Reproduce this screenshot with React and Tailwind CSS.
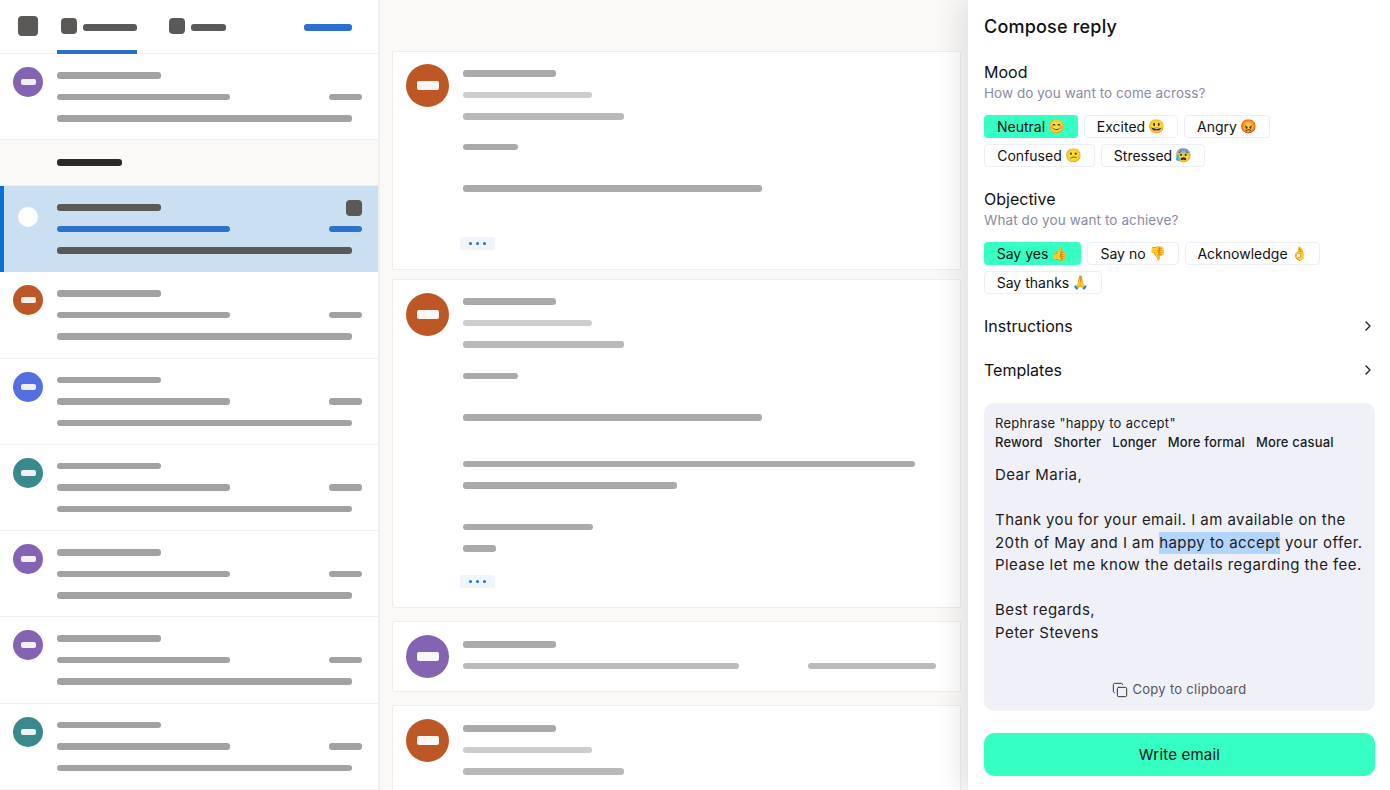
import React from 'react';
import { ChevronRight, Copy } from 'lucide-react';

const Bar = ({ className }) => <div className={`h-[6.5px] rounded-[3px] blur-[0.3px] ${className}`} />;

const Avatar = ({ color }) => (
    <div className={`w-[30px] h-[30px] rounded-full flex items-center justify-center shrink-0 ${color}`}>
        <div className="w-[15px] h-[6px] rounded-[2px] bg-white/90" />
    </div>
);

const BigAvatar = ({ color }) => (
    <div className={`w-[43px] h-[43px] rounded-full flex items-center justify-center shrink-0 ${color}`}>
        <div className="w-[22px] h-[9px] rounded-[2px] bg-white/95" />
    </div>
);

const Row = ({ color }) => (
    <div className="h-[86.3px] flex pl-[13px] pt-[13px] border-b border-[#f1f0ee] bg-white">
        <Avatar color={color} />
        <div className="ml-[14px] w-[305px] pt-[5px]">
            <Bar className="w-[104px] bg-[#a3a2a0]" />
            <div className="flex justify-between mt-[15px]">
                <Bar className="w-[173px] bg-[#a3a2a0]" />
                <Bar className="w-[33px] bg-[#a3a2a0]" />
            </div>
            <Bar className="w-[295px] mt-[15px] bg-[#a3a2a0]" />
        </div>
    </div>
);

const MoreChip = ({ className }) => (
    <div className={`w-[35px] h-[13px] ml-[-3px] rounded-[2px] bg-[#eff5fb] flex items-center justify-center gap-[4px] ${className}`}>
        <span className="w-[3px] h-[3px] rounded-full bg-[#2a6fcb]" />
        <span className="w-[3px] h-[3px] rounded-full bg-[#2a6fcb]" />
        <span className="w-[3px] h-[3px] rounded-full bg-[#2a6fcb]" />
    </div>
);

const MessageHead = () => (
    <>
        <Bar className="w-[93px] bg-[#aaaaa8]" />
        <Bar className="w-[129px] mt-[15px] bg-[#cdcdcb]" />
        <Bar className="w-[161px] mt-[15px] bg-[#b9b9b7]" />
    </>
);

const Chip = ({ label, emoji, active, className }) => (
    <div className={`h-[23px] flex items-center justify-center gap-[3px] rounded-[4px] text-[14px] text-[#111] whitespace-nowrap ${active ? 'bg-[#36ffc4]' : 'bg-white border border-[#eeeef6]'} ${className}`}>
        {label}
        <span className="text-[13.5px] leading-none">{emoji}</span>
    </div>
);

const App = () => {
    return (
        <div className="w-[1390px] h-[790px] overflow-hidden flex bg-white font-['Inter','Noto_Sans',sans-serif]">
            {/* Mail list */}
            <div className="w-[380px] shrink-0 border-r-2 border-[#f1f0ee]">
                <div className="h-[54px] flex border-b border-[#f1f0ee]">
                    <div className="w-[20px] h-[20px] mt-[16px] ml-[18px] rounded-[4px] bg-[#5a5957]" />
                    <div className="ml-[19px] w-[80px] h-[54px] border-b-4 border-[#2a6fcb] flex pl-[4px] pt-[18px]">
                        <div className="w-[16px] h-[16px] rounded-[4px] bg-[#5a5957]" />
                        <Bar className="w-[54px] ml-[6px] mt-[6px] bg-[#5a5957]" />
                    </div>
                    <div className="ml-[32px] flex pt-[18px]">
                        <div className="w-[16px] h-[16px] rounded-[4px] bg-[#5a5957]" />
                        <Bar className="w-[35px] ml-[6px] mt-[6px] bg-[#5a5957]" />
                    </div>
                    <Bar className="w-[48px] ml-[78px] mt-[24px] bg-[#2a6fcb]" />
                </div>
                <Row color="bg-[#8463b3]" />
                <div className="h-[46px] bg-[#faf9f7] pl-[57px] pt-[19px] border-b border-[#f1f0ee]">
                    <Bar className="w-[65px] bg-[#2b2a29]" />
                </div>
                <div className="h-[86px] flex bg-[#cbdff2] border-l-[4px] border-[#0b72d4] pl-[14px] pt-[21px]">
                    <div className="w-[20px] h-[20px] rounded-full bg-white" />
                    <div className="ml-[19px] w-[305px] relative mt-[-3px]">
                        <Bar className="w-[104px] bg-[#5a5957]" />
                        <div className="absolute right-0 top-[-4px] w-[16px] h-[16px] rounded-[4px] bg-[#5a5957]" />
                        <div className="flex justify-between mt-[15px]">
                            <Bar className="w-[173px] bg-[#2f72cc]" />
                            <Bar className="w-[33px] bg-[#2f72cc]" />
                        </div>
                        <Bar className="w-[295px] mt-[15px] bg-[#5a5957]" />
                    </div>
                </div>
                <Row color="bg-[#bd5725]" />
                <Row color="bg-[#5470e0]" />
                <Row color="bg-[#3a8a8d]" />
                <Row color="bg-[#8463b3]" />
                <Row color="bg-[#8463b3]" />
                <Row color="bg-[#3a8a8d]" />
            </div>

            {/* Conversation */}
            <div className="w-[588px] shrink-0 bg-[#faf9f7] pl-[12px] pt-[51px]">
                <div className="w-[569px] h-[219px] bg-white border border-[#eeedeb] rounded-[2px] flex pl-[13px] pt-[12px]">
                    <BigAvatar color="bg-[#bd5725]" />
                    <div className="ml-[14px] pt-[6px]">
                        <MessageHead />
                        <Bar className="w-[55px] mt-[24px] bg-[#aaaaa8]" />
                        <Bar className="w-[299px] mt-[35px] bg-[#aaaaa8]" />
                        <MoreChip className="mt-[45px]" />
                    </div>
                </div>
                <div className="w-[569px] h-[329px] mt-[9px] bg-white border border-[#eeedeb] rounded-[2px] flex pl-[13px] pt-[13px]">
                    <BigAvatar color="bg-[#bd5725]" />
                    <div className="ml-[14px] pt-[5px]">
                        <MessageHead />
                        <Bar className="w-[55px] mt-[25px] bg-[#aaaaa8]" />
                        <Bar className="w-[299px] mt-[35px] bg-[#aaaaa8]" />
                        <Bar className="w-[452px] mt-[40px] bg-[#aaaaa8]" />
                        <Bar className="w-[214px] mt-[15px] bg-[#aaaaa8]" />
                        <Bar className="w-[130px] mt-[35px] bg-[#aaaaa8]" />
                        <Bar className="w-[33px] mt-[15px] bg-[#aaaaa8]" />
                        <MoreChip className="mt-[23px]" />
                    </div>
                </div>
                <div className="w-[569px] h-[71px] mt-[13px] bg-white border border-[#eeedeb] rounded-[2px] flex pl-[13px] pt-[13px]">
                    <BigAvatar color="bg-[#8463b3]" />
                    <div className="ml-[14px] pt-[6px] w-[473px]">
                        <Bar className="w-[93px] bg-[#aaaaa8]" />
                        <div className="flex justify-between mt-[15px]">
                            <Bar className="w-[276px] bg-[#bbbbb9]" />
                            <Bar className="w-[128px] bg-[#bbbbb9]" />
                        </div>
                    </div>
                </div>
                <div className="w-[569px] h-[120px] mt-[13px] bg-white border border-[#eeedeb] rounded-[2px] flex pl-[13px] pt-[13px]">
                    <BigAvatar color="bg-[#bd5725]" />
                    <div className="ml-[14px] pt-[6px]">
                        <MessageHead />
                    </div>
                </div>
            </div>

            {/* Compose panel */}
            <div className="w-[422px] shrink-0 bg-white pl-[16px] pr-[15px] relative shadow-[-10px_0_24px_rgba(0,0,0,0.09)]">
                <h1 className="text-[18px] leading-[24px] mt-[15px] font-medium text-[#111] tracking-[0.2px]">Compose reply</h1>
                <div className="mt-[22px] text-[16px] leading-[22px] text-[#111]">Mood</div>
                <div className="text-[13.5px] leading-[20px] text-[#8a8aa3] tracking-[0.05px]">How do you want to come across?</div>
                <div className="mt-[12px] flex flex-wrap gap-x-[6px] gap-y-[6px]">
                    <Chip active label="Neutral" emoji="😊" className="w-[94px]" />
                    <Chip label="Excited" emoji="😃" className="w-[94px]" />
                    <Chip label="Angry" emoji="😡" className="w-[86px]" />
                    <Chip label="Confused" emoji="😕" className="w-[111px]" />
                    <Chip label="Stressed" emoji="😰" className="w-[104px]" />
                </div>
                <div className="mt-[21px] text-[16px] leading-[22px] text-[#111]">Objective</div>
                <div className="text-[13.5px] leading-[20px] text-[#8a8aa3] tracking-[0.1px]">What do you want to achieve?</div>
                <div className="mt-[12px] flex flex-wrap gap-x-[6px] gap-y-[6px]">
                    <Chip active label="Say yes" emoji="👍" className="w-[97px]" />
                    <Chip label="Say no" emoji="👎" className="w-[92px]" />
                    <Chip label="Acknowledge" emoji="👌" className="w-[135px]" />
                    <Chip label="Say thanks" emoji="🙏" className="w-[118px]" />
                </div>
                <div className="mt-[20px] h-[24px] flex items-center justify-between text-[16px] text-[#111]">
                    Instructions
                    <ChevronRight size={16} strokeWidth={2} className="text-[#222] mr-[-1px]" />
                </div>
                <div className="mt-[20px] h-[24px] flex items-center justify-between text-[16px] text-[#111]">
                    Templates
                    <ChevronRight size={16} strokeWidth={2} className="text-[#222] mr-[-1px]" />
                </div>
                <div className="mt-[21px] h-[308px] w-[391px] rounded-[10px] bg-[#f0f1f8] px-[11px] pt-[11px] text-[#1c1c22]">
                    <div className="text-[13px] leading-[19px] tracking-[0.3px]">Rephrase "happy to accept"</div>
                    <div className="flex gap-[11px] text-[13px] leading-[19px] font-medium tracking-[0.15px]">
                        <span>Reword</span><span>Shorter</span><span>Longer</span><span>More formal</span><span>More casual</span>
                    </div>
                    <div className="mt-[12px] text-[15px] leading-[22.5px] tracking-[0.45px]">
                        <p>Dear Maria,</p>
                        <p className="mt-[22.5px]">Thank you for your email. I am available on the</p>
                        <p>20th of May and I am <span className="inline-block bg-[#b3d4fb]">happy to accept</span> your offer.</p>
                        <p>Please let me know the details regarding the fee.</p>
                        <p className="mt-[22.5px]">Best regards,</p>
                        <p>Peter Stevens</p>
                    </div>
                    <div className="mt-[36px] flex items-center justify-center gap-[4px] text-[13px] text-[#555560] tracking-[0.3px]">
                        <Copy size={16} strokeWidth={1.5} className="text-[#333]" />
                        Copy to clipboard
                    </div>
                </div>
                <button className="mt-[22px] h-[43px] w-[391px] pt-[2px] rounded-[10px] bg-[#36ffc4] text-[15px] text-[#111] tracking-[0.2px]">Write email</button>
            </div>
        </div>
    );
};

export default App;
